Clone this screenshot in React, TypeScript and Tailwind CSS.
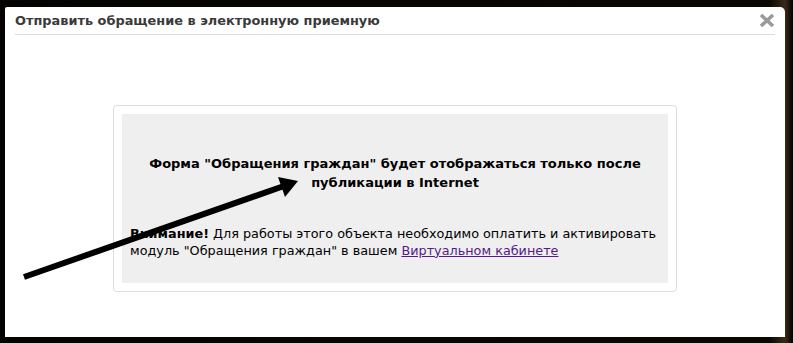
import React from 'react';

const font = { fontFamily: '"DejaVu Sans", Verdana, sans-serif' };

const CloseIcon = () => (
    <svg width="16" height="13" viewBox="0 0 16 13" className="block">
        <path d="M2 1 L14 12 M14 1 L2 12" stroke="#9a9a9a" strokeWidth="3.6" strokeLinecap="butt" />
    </svg>
);

// Hand-drawn pointer arrow laid over the dialog
const Arrow = () => (
    <svg width="793" height="343" viewBox="0 0 793 343" className="absolute left-0 top-0 pointer-events-none">
        <line x1="24" y1="277" x2="284" y2="186" stroke="#000" strokeWidth="6" />
        <polygon points="298,181 278,177 285,197" fill="#000" />
    </svg>
);

export default function App() {
    return (
        <div
            className="relative w-[793px] h-[343px] bg-[linear-gradient(to_right,#050301_0%,#0a0703_97%,#3b2a17_99%,#000_100%)] pt-[7px] pl-[5px] pr-[8px] pb-[6px]"
            style={font}
        >
            <div className="h-full bg-white rounded-tr-[5px] rounded-tl-[2px] flex flex-col">
                {/* Header */}
                <div className="flex items-start justify-between px-[10px] pt-[6px]">
                    <div className="flex-1 border-b border-[#dcdcdc] pb-[5px] text-[12.9px] leading-[16px]">
                        <span className="font-bold text-[#3a3a3a]">
                            Отправить обращение в электронную приемную
                        </span>
                    </div>
                    <div className="w-[0px] relative">
                        <div className="absolute right-[0px] top-[1px]">
                            <CloseIcon />
                        </div>
                    </div>
                </div>

                {/* Body */}
                <div className="pl-[108px] pt-[70px]">
                    <div className="w-[564px] border border-[#dddddd] rounded-[4px] p-2">
                        <div className="h-[169px] bg-[#efefef] px-2 pt-[40px]">
                            <p className="text-center font-bold text-[13px] leading-[19px] text-black">
                                Форма "Обращения граждан" будет отображаться только после публикации в Internet
                            </p>
                            <p className="mt-[34px] text-[12.8px] leading-[16.5px] text-black">
                                <b>Внимание!</b> Для работы этого объекта необходимо оплатить и активировать модуль "Обращения граждан" в вашем{' '}
                                <a className="text-[#551a8b] underline">Виртуальном кабинете</a>
                            </p>
                        </div>
                    </div>
                </div>
            </div>
            <Arrow />
        </div>
    );
}
